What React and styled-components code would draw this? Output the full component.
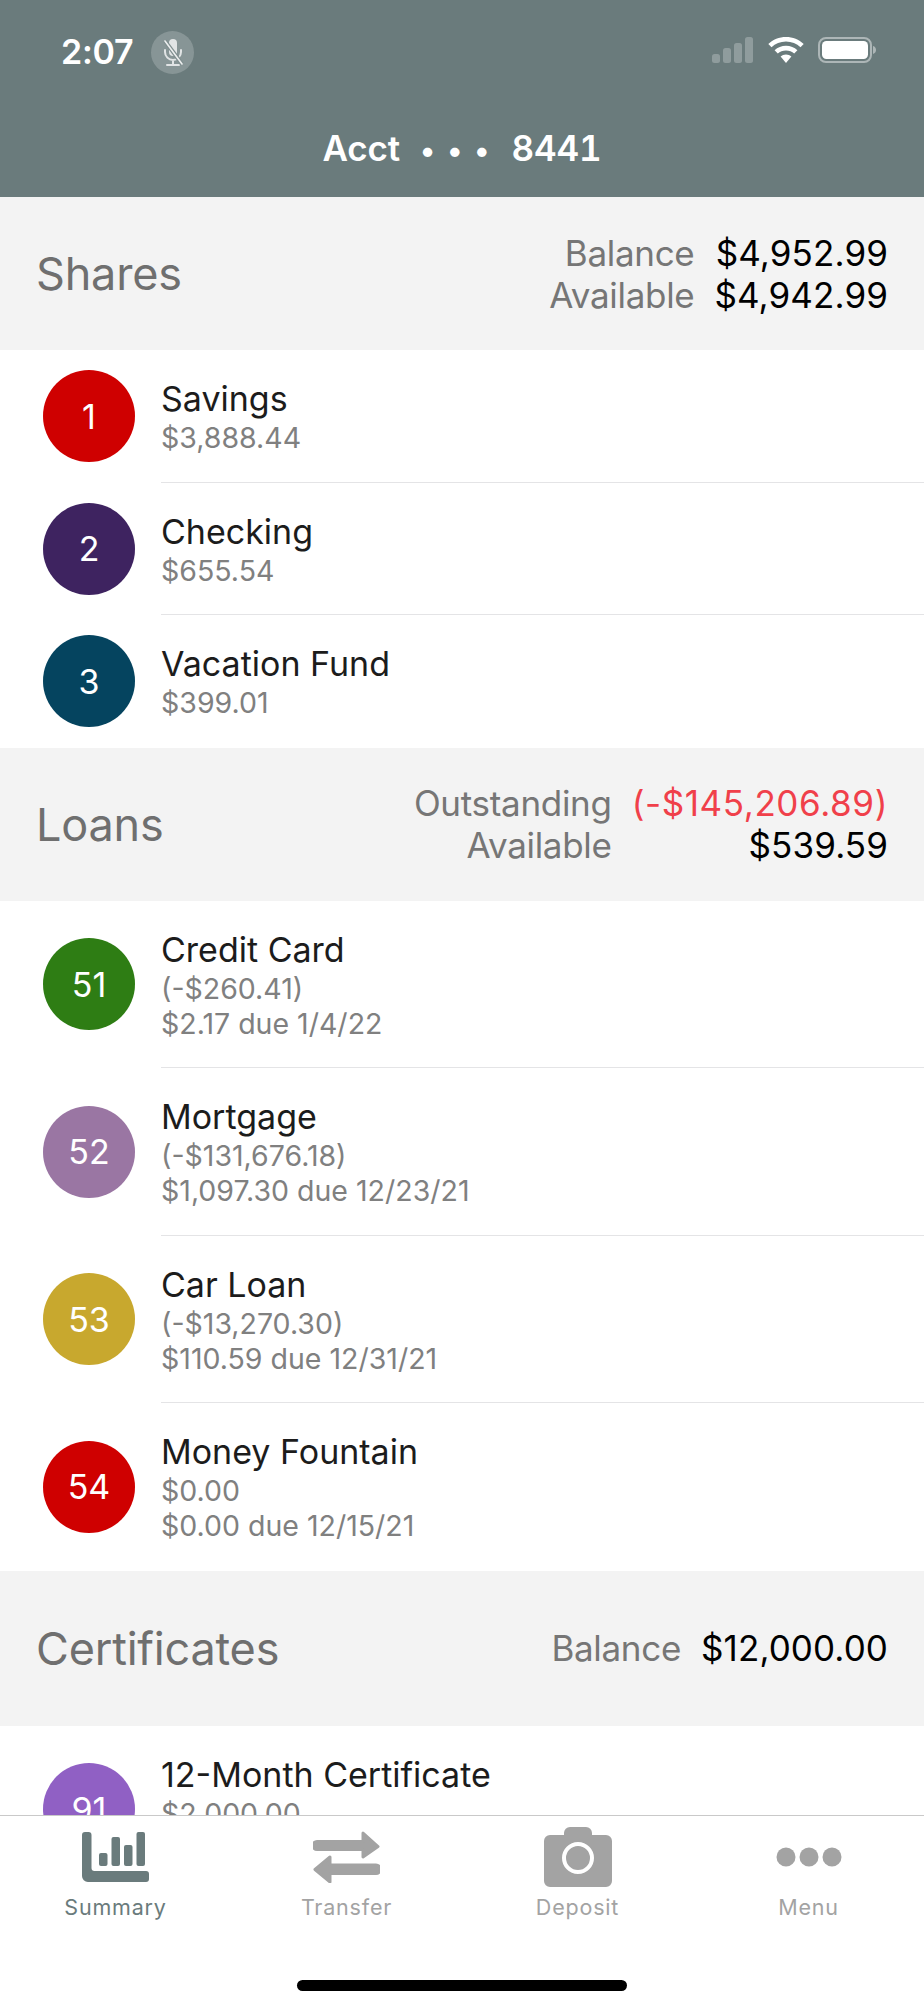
import { Fragment } from "react";
import styled, { createGlobalStyle } from "styled-components";

const GlobalStyle = createGlobalStyle`
  html, body {
    margin: 0;
    padding: 0;
    background: #fff;
    font-family: Inter, "Noto Sans", "Liberation Sans", sans-serif;
  }
`;

const Screen = styled.div`
  width: 924px;
  height: 2000px;
  display: flex;
  flex-direction: column;
  overflow: hidden;
`;

const Header = styled.header`
  flex: none;
  height: 197px;
  box-sizing: border-box;
  background: #6a7b7c;
  color: #fff;
  display: flex;
  flex-direction: column;
`;

const StatusBar = styled.div`
  height: 126px;
  box-sizing: border-box;
  padding: 31px 48px 0 61px;
  display: flex;
  align-items: flex-start;
`;

const Time = styled.span`
  font-size: 34px;
  font-weight: 600;
  line-height: 42px;
  letter-spacing: -0.3px;
  width: 90px;
`;

const MicBubble = styled.span`
  width: 43px;
  height: 43px;
  border-radius: 50%;
  background: rgba(255, 255, 255, 0.2);
  display: flex;
  align-items: center;
  justify-content: center;
`;

const StatusIcons = styled.div`
  margin-left: auto;
  margin-top: 6px;
  display: flex;
  align-items: center;
  gap: 14px;
`;

const Title = styled.h1`
  margin: 0;
  font-size: 35px;
  font-weight: 600;
  line-height: 44px;
  text-align: center;
  letter-spacing: -0.1px;
  font-variant-numeric: tabular-nums;
`;

const Dots = styled.span`
  display: inline-block;
  margin: 0 10px 0 20px;
  letter-spacing: 12px;
  font-size: 30px;
`;

const Scroll = styled.main`
  flex: 1;
  min-height: 0;
  overflow: hidden;
`;

const SectionHead = styled.section`
  height: ${(p) => p.$height || 153}px;
  box-sizing: border-box;
  padding: 0 36px;
  background: #f3f3f3;
  display: flex;
  align-items: center;
  justify-content: space-between;
`;

const SectionName = styled.h2`
  margin: 0;
  font-size: 45px;
  font-weight: 400;
  color: #6f6f6f;
  letter-spacing: -0.2px;
`;

const Totals = styled.div`
  display: grid;
  grid-template-columns: auto auto;
  column-gap: 20px;
  font-size: 35px;
  line-height: 42px;
`;

const TotalLabel = styled.span`
  color: #767676;
  text-align: right;
  letter-spacing: -0.3px;
`;

const TotalValue = styled.span`
  color: ${(p) => (p.$negative ? "#f0404a" : "#000")};
  text-align: right;
  letter-spacing: ${(p) => (p.$negative ? "0.6px" : "0.1px")};
`;

const Row = styled.div`
  display: flex;
  align-items: center;
  padding-left: 43px;
  background: #fff;
`;

const Badge = styled.span`
  flex: none;
  width: 92px;
  height: 92px;
  border-radius: 50%;
  background: ${(p) => p.$color};
  color: #fff;
  font-size: 34px;
  display: flex;
  align-items: center;
  justify-content: center;
  margin-right: 26px;
`;

const RowText = styled.div`
  flex: 1;
  box-sizing: border-box;
  min-height: ${(p) => (p.$tall ? "167.5px" : "0")};
  padding: 28px 0 26.5px;
  border-bottom: 1px solid ${(p) => (p.$last ? "transparent" : "#e4e4e6")};
`;

const RowName = styled.div`
  font-size: 34px;
  line-height: 42px;
  color: #1c1c1c;
`;

const RowSub = styled.div`
  font-size: 28.5px;
  line-height: 35px;
  color: #808080;
`;

const TabBar = styled.nav`
  flex: none;
  height: 185px;
  box-sizing: border-box;
  border-top: 1px solid #c9c9c9;
  background: #fff;
  display: flex;
  flex-direction: column;
`;

const Tabs = styled.div`
  display: grid;
  grid-template-columns: repeat(4, 231px);
`;

const Tab = styled.div`
  padding-top: 11px;
  display: flex;
  flex-direction: column;
  align-items: center;
  color: ${(p) => (p.$active ? "#6a7b7c" : "#a3a3a3")};
`;

const TabIcon = styled.span`
  height: 60px;
  display: flex;
  align-items: center;
  justify-content: center;
`;

const TabLabel = styled.span`
  margin-top: 6px;
  font-size: 21.5px;
  line-height: 28px;
  font-weight: 400;
  letter-spacing: 0.8px;
`;

const HomeBar = styled.div`
  width: 330px;
  height: 11px;
  border-radius: 6px;
  background: #000;
  margin: 59px auto 0;
`;

const MicIcon = () => (
  <svg width="22" height="28" viewBox="0 0 22 28" fill="none">
    <path d="M7 4a4 4 0 0 1 8 0v9a4 4 0 0 1-8 0z" fill="rgba(255,255,255,.75)" />
    <path d="M3 11v2a8 8 0 0 0 16 0v-2M11 21v4M5 26h12" stroke="rgba(255,255,255,.75)" strokeWidth="2" strokeLinecap="round" />
    <path d="M3 2l17 23" stroke="#7f8e8f" strokeWidth="4" />
    <path d="M3 2l17 23" stroke="rgba(255,255,255,.85)" strokeWidth="1.6" strokeLinecap="round" />
  </svg>
);

const SignalIcon = () => (
  <svg width="42" height="26" viewBox="0 0 42 26" fill="rgba(255,255,255,.25)">
    <rect x="0" y="17" width="8" height="9" rx="2.5" />
    <rect x="11" y="11" width="8" height="15" rx="2.5" />
    <rect x="22" y="6" width="8" height="20" rx="2.5" />
    <rect x="33" y="0" width="8" height="26" rx="2.5" />
  </svg>
);

const WifiIcon = () => (
  <svg width="36" height="26" viewBox="0 0 36 26" fill="#fff">
    <path d="M18 0C11.200 0 5 2.600 0.300 7l3.200 3.300C7.300 6.700 12.400 4.500 18 4.500s10.700 2.200 14.500 5.800L35.700 7C31 2.600 24.800 0 18 0z" />
    <path d="M18 8.800c-4.400 0-8.400 1.700-11.400 4.500l3.200 3.300c2.100-2 5-3.200 8.200-3.200s6.100 1.200 8.200 3.200l3.200-3.300c-3-2.800-7-4.500-11.400-4.500z" />
    <path d="M18 17.500c-2.100 0-4 .8-5.400 2.100L18 26l5.400-6.400c-1.400-1.300-3.300-2.100-5.400-2.100z" />
  </svg>
);

const BatteryIcon = () => (
  <svg width="58" height="26" viewBox="0 0 58 26" fill="none">
    <rect x="1" y="1" width="52" height="24" rx="7" stroke="rgba(255,255,255,.45)" strokeWidth="2" />
    <rect x="4" y="4" width="46" height="18" rx="4.500" fill="#fff" />
    <path d="M55 9c2 .6 3 2.200 3 4s-1 3.400-3 4z" fill="rgba(255,255,255,.45)" />
  </svg>
);

const SummaryIcon = () => (
  <svg width="67" height="50" viewBox="0 0 67 50" fill="currentColor">
    <path d="M3 0h3.500a3 3 0 0 1 3 3v33a3 3 0 0 0 3 3H64a3 3 0 0 1 3 3v5a3 3 0 0 1-3 3H6a6 6 0 0 1-6-6V3a3 3 0 0 1 3-3z" />
    <rect x="17" y="21" width="8.500" height="13" rx="2" />
    <rect x="29.500" y="5" width="8.500" height="29" rx="2" />
    <rect x="42" y="13" width="8.500" height="21" rx="2" />
    <rect x="54.500" y="0" width="8.500" height="34" rx="2" />
  </svg>
);

const TransferIcon = () => (
  <svg width="67" height="52" viewBox="0 0 67 52" fill="currentColor" stroke="currentColor" strokeLinejoin="round" strokeWidth="3">
    <path d="M4 10.500h46V2l15 13.500L50 26v-7.500H4a3.500 3.500 0 0 1 0-8z" />
    <path d="M63 34H17v-8L2 38.500 17 51v-8.500h46a4 4 0 0 0 0-8.500z" />
  </svg>
);

const CameraIcon = () => (
  <svg width="68" height="60" viewBox="0 0 68 60" fill="currentColor">
    <path
      fillRule="evenodd"
      d="M20 8V6a6 6 0 0 1 6-6h16a6 6 0 0 1 6 6v2h14a6 6 0 0 1 6 6v40a6 6 0 0 1-6 6H6a6 6 0 0 1-6-6V14a6 6 0 0 1 6-6zM34 15a16 16 0 1 0 0 32 16 16 0 0 0 0-32zM34 19a12 12 0 1 1 0 24 12 12 0 0 1 0-24z"
    />
  </svg>
);

const MoreIcon = () => (
  <svg width="66" height="20" viewBox="0 0 66 20" fill="currentColor">
    <circle cx="10" cy="10" r="9.500" />
    <circle cx="33" cy="10" r="9.500" />
    <circle cx="56" cy="10" r="9.500" />
  </svg>
);

const sections = [
  {
    name: "Shares",
    totals: [
      ["Balance", "$4,952.99"],
      ["Available", "$4,942.99"],
    ],
    rows: [
      { id: 1, color: "#cf0000", name: "Savings", lines: ["$3,888.44"] },
      { id: 2, color: "#3e2360", name: "Checking", lines: ["$655.54"] },
      { id: 3, color: "#05445f", name: "Vacation Fund", lines: ["$399.01"] },
    ],
  },
  {
    name: "Loans",
    totals: [
      ["Outstanding", "(-$145,206.89)", true],
      ["Available", "$539.59"],
    ],
    rows: [
      { id: 51, color: "#2e7d14", name: "Credit Card", lines: ["(-$260.41)", "$2.17 due 1/4/22"] },
      { id: 52, color: "#9a76a3", name: "Mortgage", lines: ["(-$131,676.18)", "$1,097.30 due 12/23/21"] },
      { id: 53, color: "#c8a82e", name: "Car Loan", lines: ["(-$13,270.30)", "$110.59 due 12/31/21"] },
      { id: 54, color: "#cf0000", name: "Money Fountain", lines: ["$0.00", "$0.00 due 12/15/21"] },
    ],
  },
  {
    name: "Certificates",
    height: 155,
    totals: [["Balance", "$12,000.00"]],
    rows: [{ id: 91, color: "#9060c4", name: "12-Month Certificate", lines: ["$2,000.00"], tall: true }],
  },
];

const tabs = [
  { label: "Summary", icon: <SummaryIcon />, active: true },
  { label: "Transfer", icon: <TransferIcon /> },
  { label: "Deposit", icon: <CameraIcon /> },
  { label: "Menu", icon: <MoreIcon /> },
];

export default function App() {
  return (
    <Screen>
      <GlobalStyle />
      <Header>
        <StatusBar>
          <Time>2:07</Time>
          <MicBubble>
            <MicIcon />
          </MicBubble>
          <StatusIcons>
            <SignalIcon />
            <WifiIcon />
            <BatteryIcon />
          </StatusIcons>
        </StatusBar>
        <Title>
          Acct<Dots>•••</Dots>8441
        </Title>
      </Header>
      <Scroll>
        {sections.map((section) => (
          <div key={section.name}>
            <SectionHead $height={section.height}>
              <SectionName>{section.name}</SectionName>
              <Totals>
                {section.totals.map(([label, value, negative]) => (
                  <Fragment key={label}>
                    <TotalLabel>{label}</TotalLabel>
                    <TotalValue $negative={negative}>{value}</TotalValue>
                  </Fragment>
                ))}
              </Totals>
            </SectionHead>
            {section.rows.map((row, i) => (
              <Row key={row.id}>
                <Badge $color={row.color}>{row.id}</Badge>
                <RowText $last={i === section.rows.length - 1} $tall={row.tall}>
                  <RowName>{row.name}</RowName>
                  {row.lines.map((line) => (
                    <RowSub key={line}>{line}</RowSub>
                  ))}
                </RowText>
              </Row>
            ))}
          </div>
        ))}
      </Scroll>
      <TabBar>
        <Tabs>
          {tabs.map((tab) => (
            <Tab key={tab.label} $active={tab.active}>
              <TabIcon>{tab.icon}</TabIcon>
              <TabLabel>{tab.label}</TabLabel>
            </Tab>
          ))}
        </Tabs>
        <HomeBar />
      </TabBar>
    </Screen>
  );
}
